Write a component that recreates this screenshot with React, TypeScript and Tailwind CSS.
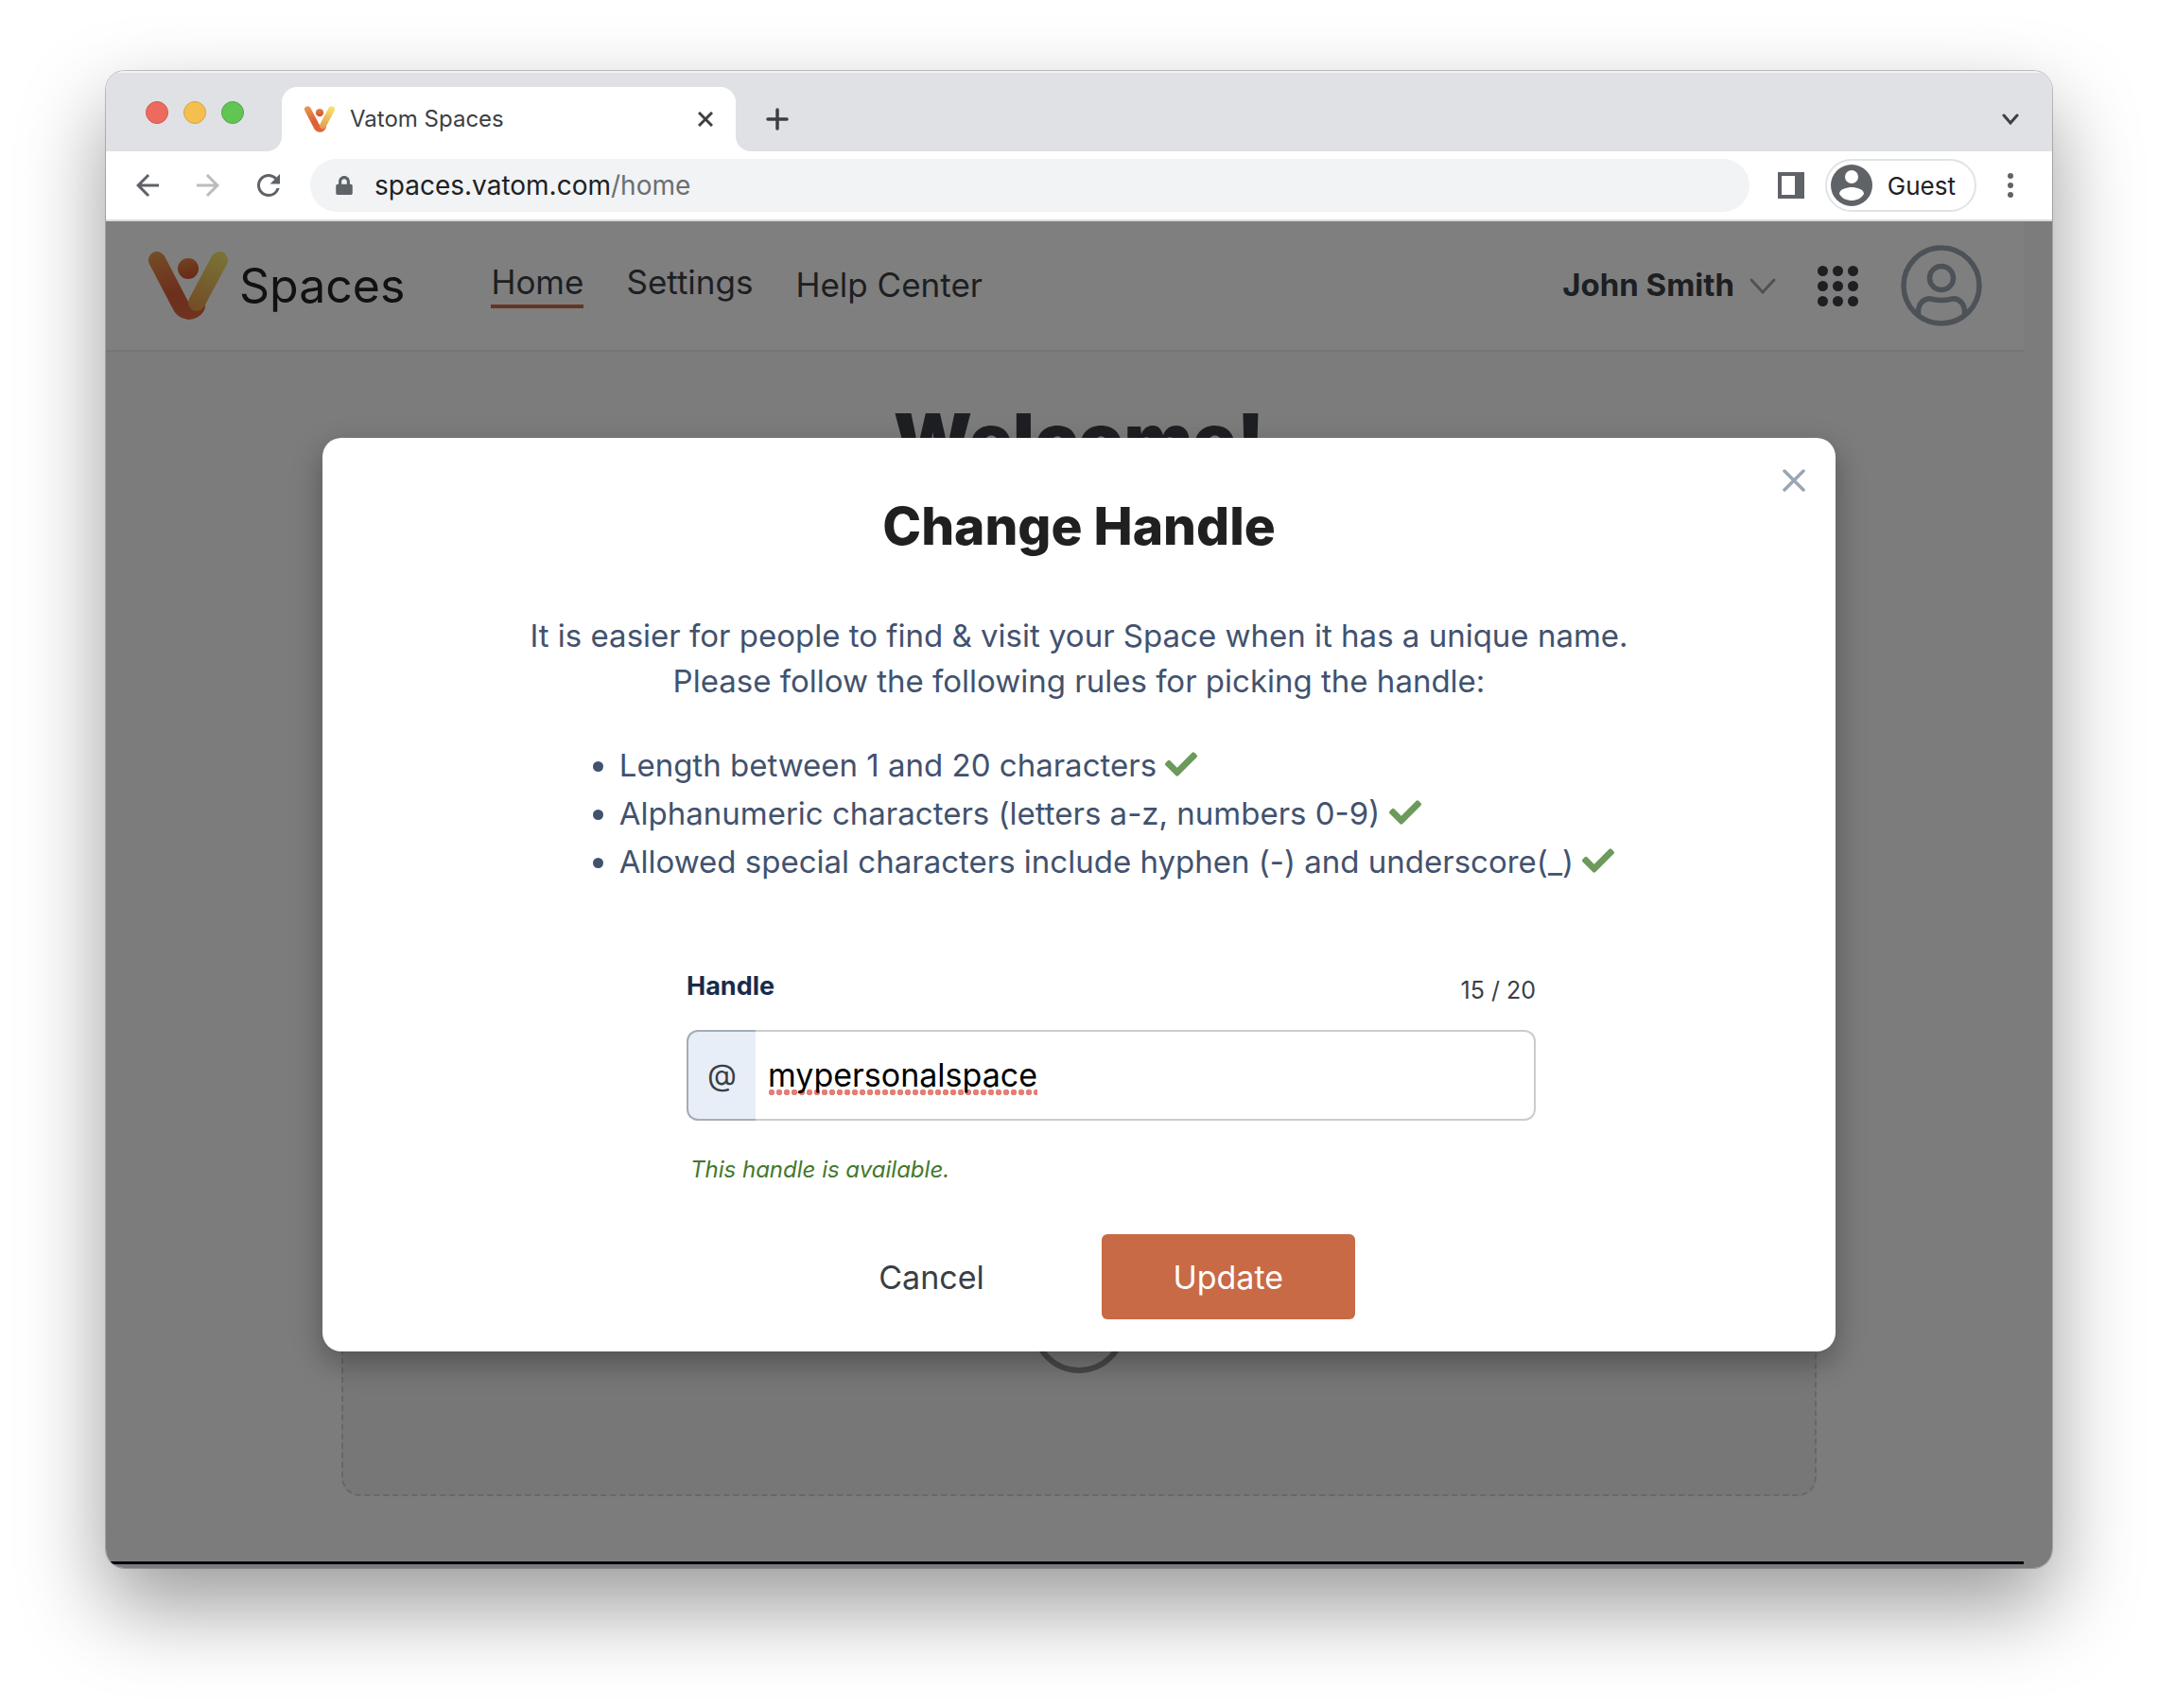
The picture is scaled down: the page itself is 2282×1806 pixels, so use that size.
import { useState } from "react";
import type { ReactNode } from "react";
import { FaCheck, FaLock } from "react-icons/fa";
import { MdArrowBack, MdArrowForward, MdRefresh } from "react-icons/md";

const MAX_LENGTH = 20;

const rules = [
  "Length between 1 and 20 characters",
  "Alphanumeric characters (letters a-z, numbers 0-9)",
  "Allowed special characters include hyphen (-) and underscore(_)",
];

interface LogoProps {
  id: string;
  className?: string;
}

function VatomLogo({ id, className }: LogoProps) {
  return (
    <svg viewBox="0 0 84 72" className={className} fill="none" strokeWidth="18" strokeLinecap="round" aria-hidden="true">
      <defs>
        <linearGradient id={`${id}-left`} gradientUnits="userSpaceOnUse" x1="20" y1="0" x2="40" y2="72">
          <stop offset="0" stopColor="#e8954e" />
          <stop offset="0.6" stopColor="#d95f38" />
          <stop offset="1" stopColor="#e0663c" />
        </linearGradient>
        <linearGradient id={`${id}-right`} gradientUnits="userSpaceOnUse" x1="76" y1="4" x2="50" y2="62">
          <stop offset="0" stopColor="#f3e36c" />
          <stop offset="1" stopColor="#e69a4c" />
        </linearGradient>
        <linearGradient id={`${id}-dot`} x1="0.4" y1="0" x2="0.6" y2="1">
          <stop offset="0" stopColor="#e5843f" />
          <stop offset="1" stopColor="#d4502f" />
        </linearGradient>
      </defs>
      <path d="m9 9 24 46c4 10 14 10 18 3" stroke={`url(#${id}-left)`} />
      <path d="M75 9 51 54" stroke={`url(#${id}-right)`} />
      <circle cx="42" cy="18" r="11" fill={`url(#${id}-dot)`} />
    </svg>
  );
}

function BrowserTabs() {
  return (
    <div className="flex h-[85px] items-end bg-[#dfe1e5] pr-[35px] shadow-[inset_0_2px_0_#f1f2f4]">
      <div className="flex h-[82px] items-center gap-4 pl-[42px]">
        <span className="size-6 rounded-full border border-[#d8564b] bg-[#ed6a5e]" />
        <span className="size-6 rounded-full border border-[#dba13a] bg-[#f5bf4f]" />
        <span className="size-6 rounded-full border border-[#50a843] bg-[#61c554]" />
      </div>
      <div className="ml-6 size-4 rounded-br-2xl bg-[#dfe1e5] shadow-[4px_4px_0_4px_white] [clip-path:inset(0)]" />
      <div className="flex h-[68px] w-[480px] items-center rounded-t-2xl bg-white px-6">
        <VatomLogo id="tab" className="h-7 w-8" />
        <span className="ml-4 flex-1 text-2xl text-[#3c4043]">Vatom Spaces</span>
        <button aria-label="Close tab" className="text-[#3c4043]">
          <svg viewBox="0 0 16 16" className="size-4" fill="none" stroke="currentColor" strokeWidth="3">
            <path d="M1 1l14 14M15 1 1 15" />
          </svg>
        </button>
      </div>
      <div className="size-4 rounded-bl-2xl bg-[#dfe1e5] shadow-[-4px_4px_0_4px_white] [clip-path:inset(0)]" />
      <button aria-label="New tab" className="mb-[22px] ml-4 text-[#3c4043]">
        <svg viewBox="0 0 24 24" className="size-6" fill="none" stroke="currentColor" strokeWidth="3.5" strokeLinecap="round">
          <path d="M12 2v20M2 12h20" />
        </svg>
      </button>
      <button aria-label="Search tabs" className="mb-7 ml-auto text-[#3c4043]">
        <svg viewBox="0 0 18 12" className="h-3 w-[18px]" fill="none" stroke="currentColor" strokeWidth="3" strokeLinecap="round">
          <path d="m2 2 7 8 7-8" />
        </svg>
      </button>
    </div>
  );
}

function BrowserToolbar() {
  return (
    <div className="flex h-[74px] items-center border-b-2 border-[#dadcde] bg-white pr-[41px] pl-[26px]">
      <div className="flex items-center gap-7 text-[36px] text-[#5f6368]">
        <button aria-label="Back">
          <MdArrowBack />
        </button>
        <button aria-label="Forward" className="text-[#babcbe]">
          <MdArrowForward />
        </button>
        <button aria-label="Reload">
          <MdRefresh />
        </button>
      </div>
      <div className="ml-[26px] flex h-14 flex-1 items-center rounded-full bg-[#f1f3f4] pl-[26px] text-[28px] text-[#202124]">
        <FaLock className="mr-[22px] size-5 text-[#5f6368]" />
        spaces.vatom.com<span className="text-[#6b6f73]">/home</span>
      </div>
      <button aria-label="Side panel" className="ml-[30px] text-[#5f6368]">
        <svg viewBox="0 0 28 28" className="size-7" fill="currentColor" fillRule="evenodd">
          <path d="M0 0h28v28H0ZM4 4v20h14V4Z" />
        </svg>
      </button>
      <button className="ml-[22px] flex h-14 items-center gap-4 rounded-full border-2 border-[#e1e3e6] pr-5 pl-1 text-[26px] text-[#202124]">
        <svg viewBox="0 0 44 44" className="size-11">
          <circle cx="22" cy="22" r="22" fill="#5f6368" />
          <circle cx="22" cy="13" r="7" fill="white" />
          <path d="M9 31c0-5 8-7 13-7s13 2 13 7c-3 5-8 7-13 7s-10-2-13-7Z" fill="white" />
        </svg>
        Guest
      </button>
      <button aria-label="Menu" className="ml-[33px] text-[#5f6368]">
        <svg viewBox="0 0 6 26" className="h-[26px] w-1.5" fill="currentColor">
          <circle cx="3" cy="3" r="3" />
          <circle cx="3" cy="13" r="3" />
          <circle cx="3" cy="23" r="3" />
        </svg>
      </button>
    </div>
  );
}

function NavLink({ className = "", children }: { className?: string; children: ReactNode }) {
  return (
    <a href="#" className={`leading-[44px] ${className}`}>
      {children}
    </a>
  );
}

function SiteHeader() {
  return (
    <header className="mr-[30px] flex h-[138px] items-center border-b-2 border-[#ebebeb] bg-white pr-11 pl-[45px] text-[#3a3f44]">
      <VatomLogo id="header" className="h-[72px] w-[84px]" />
      <span className="ml-3 text-[50px] text-[#222]">Spaces</span>
      <nav className="mb-0.5 ml-[91px] flex items-center gap-[45px] text-[35px]">
        <NavLink className="border-b-4 border-[#c86a45] pb-0.5">Home</NavLink>
        <NavLink className="border-b-4 border-transparent pb-0.5">Settings</NavLink>
        <NavLink>Help Center</NavLink>
      </nav>
      <button className="ml-auto flex items-center gap-4 text-[33px] font-bold">
        John Smith
        <svg viewBox="0 0 28 17" className="h-[17px] w-7 text-[#9aa5b1]" fill="none" stroke="currentColor" strokeWidth="3" strokeLinecap="round">
          <path d="m2 2 12 13L26 2" />
        </svg>
      </button>
      <button aria-label="Apps" className="ml-11 grid grid-cols-3 gap-[5px]">
        {Array.from({ length: 9 }, (_, i) => (
          <span key={i} className="size-[11px] rounded-full bg-[#3a3f44]" />
        ))}
      </button>
      <button aria-label="Account" className="ml-[45px] text-[#9aa5b1]">
        <svg viewBox="0 0 86 86" className="size-[86px]" fill="none" stroke="currentColor" strokeWidth="5.5">
          <circle cx="43" cy="43" r="40" />
          <circle cx="43" cy="35" r="12.5" />
          <path d="M18.5 73v-2c0-9 6-15 13-14 8 2 15 2 23 0 7-1 13 5 13 14v2" />
        </svg>
      </button>
    </header>
  );
}

function ChangeHandleDialog() {
  const [handle, setHandle] = useState("mypersonalspace");

  return (
    <div
      role="dialog"
      aria-labelledby="dialog-title"
      className="relative flex w-full max-w-[1600px] flex-col items-center rounded-[20px] bg-white pt-[59px] pb-[34px] shadow-[0_12px_32px_rgba(0,0,0,0.32)]"
    >
      <button aria-label="Close" className="absolute top-[33px] right-8 text-[#9aa5b5]">
        <svg viewBox="0 0 24 24" className="size-6" fill="none" stroke="currentColor" strokeWidth="3.5" strokeLinecap="round">
          <path d="M2 2l20 20M22 2 2 22" />
        </svg>
      </button>
      <h2 id="dialog-title" className="text-[55px] leading-[68px] font-extrabold text-[#202020]">
        Change Handle
      </h2>
      <p className="mt-[58px] text-center text-[33px] leading-[48px] text-[#42526e]">
        It is easier for people to find &amp; visit your Space when it has a unique name.
        <br />
        Please follow the following rules for picking the handle:
      </p>
      <ul className="mt-10 ml-10 list-disc pl-10 text-[33px] leading-[51px] text-[#42526e]">
        {rules.map((rule) => (
          <li key={rule}>
            {rule} <FaCheck className="inline size-[34px] align-[-4px] text-[#6b9a5b]" />
          </li>
        ))}
      </ul>

      <div className="mt-[86px] ml-[68px] w-[898px] max-w-full">
        <div className="flex items-start justify-between">
          <label htmlFor="handle" className="text-[27px] leading-10 font-bold text-[#172b4d]">
            Handle
          </label>
          <span className="pt-1 text-[25px] leading-10 text-[#3a3f44]">
            {handle.length} / {MAX_LENGTH}
          </span>
        </div>
        <div className="mt-[22px] flex h-24">
          <span className="flex w-[73px] items-center justify-center rounded-l-xl border-2 border-r-0 border-[#a5adb3] bg-[#e8eef8] text-[32px] text-[#3a3f44]">
            @
          </span>
          <div className="flex min-w-0 flex-1 items-center rounded-r-xl border-2 border-l-0 border-[#cccccc] px-[13px]">
            {/* Sized to its text so the spelling dots stop where the word does */}
            <input
              id="handle"
              value={handle}
              maxLength={MAX_LENGTH}
              onChange={(e) => setHandle(e.target.value)}
              className="field-sizing-content h-[42px] max-w-full bg-[radial-gradient(circle,#e57f76_3px,transparent_3px)] bg-[length:8px_6px] bg-bottom-left bg-repeat-x text-[34px] leading-[42px] text-black outline-none"
            />
          </div>
        </div>
        <p className="mt-8 ml-1 text-[24px] leading-10 text-[#43782b] italic">This handle is available.</p>
      </div>

      <div className="mt-12 ml-20 flex gap-[124px] text-[34px]">
        <button className="text-[#3a3f44]">Cancel</button>
        <button className="h-[90px] w-[268px] rounded-md bg-[#c86a45] text-white">Update</button>
      </div>
    </div>
  );
}

export default function App() {
  return (
    <div className="flex min-h-screen flex-col bg-white px-28 pt-[75px] pb-[148px] font-['Inter',sans-serif]">
      <div className="flex flex-1 flex-col overflow-hidden rounded-[20px] shadow-[0_0_0_1px_rgba(0,0,0,0.22),0_40px_90px_rgba(0,0,0,0.4)]">
        <BrowserTabs />
        <BrowserToolbar />
        <div className="relative flex flex-1 flex-col bg-[#f8f8f8]">
          <SiteHeader />
          <main className="flex flex-1 flex-col items-center">
            <h1 className="mt-[47px] text-[77px] leading-[92px] font-black text-[#3a3f44]">Welcome!</h1>
            <section className="mt-40 mb-[69px] flex w-[1560px] max-w-full flex-1 items-end justify-center rounded-[20px] border-2 border-dashed border-[#cfcfcf] bg-[#eeeeee]">
              <span className="mb-32 size-[100px] rounded-full border-[6px] border-[#8e9397]" />
            </section>
          </main>
          <footer className="mr-[30px] mb-1 h-[3px] bg-[#0c0028]" />

          {/* Backdrop */}
          <div className="absolute inset-0 flex items-center justify-center bg-black/50">
            <ChangeHandleDialog />
          </div>
        </div>
      </div>
    </div>
  );
}
